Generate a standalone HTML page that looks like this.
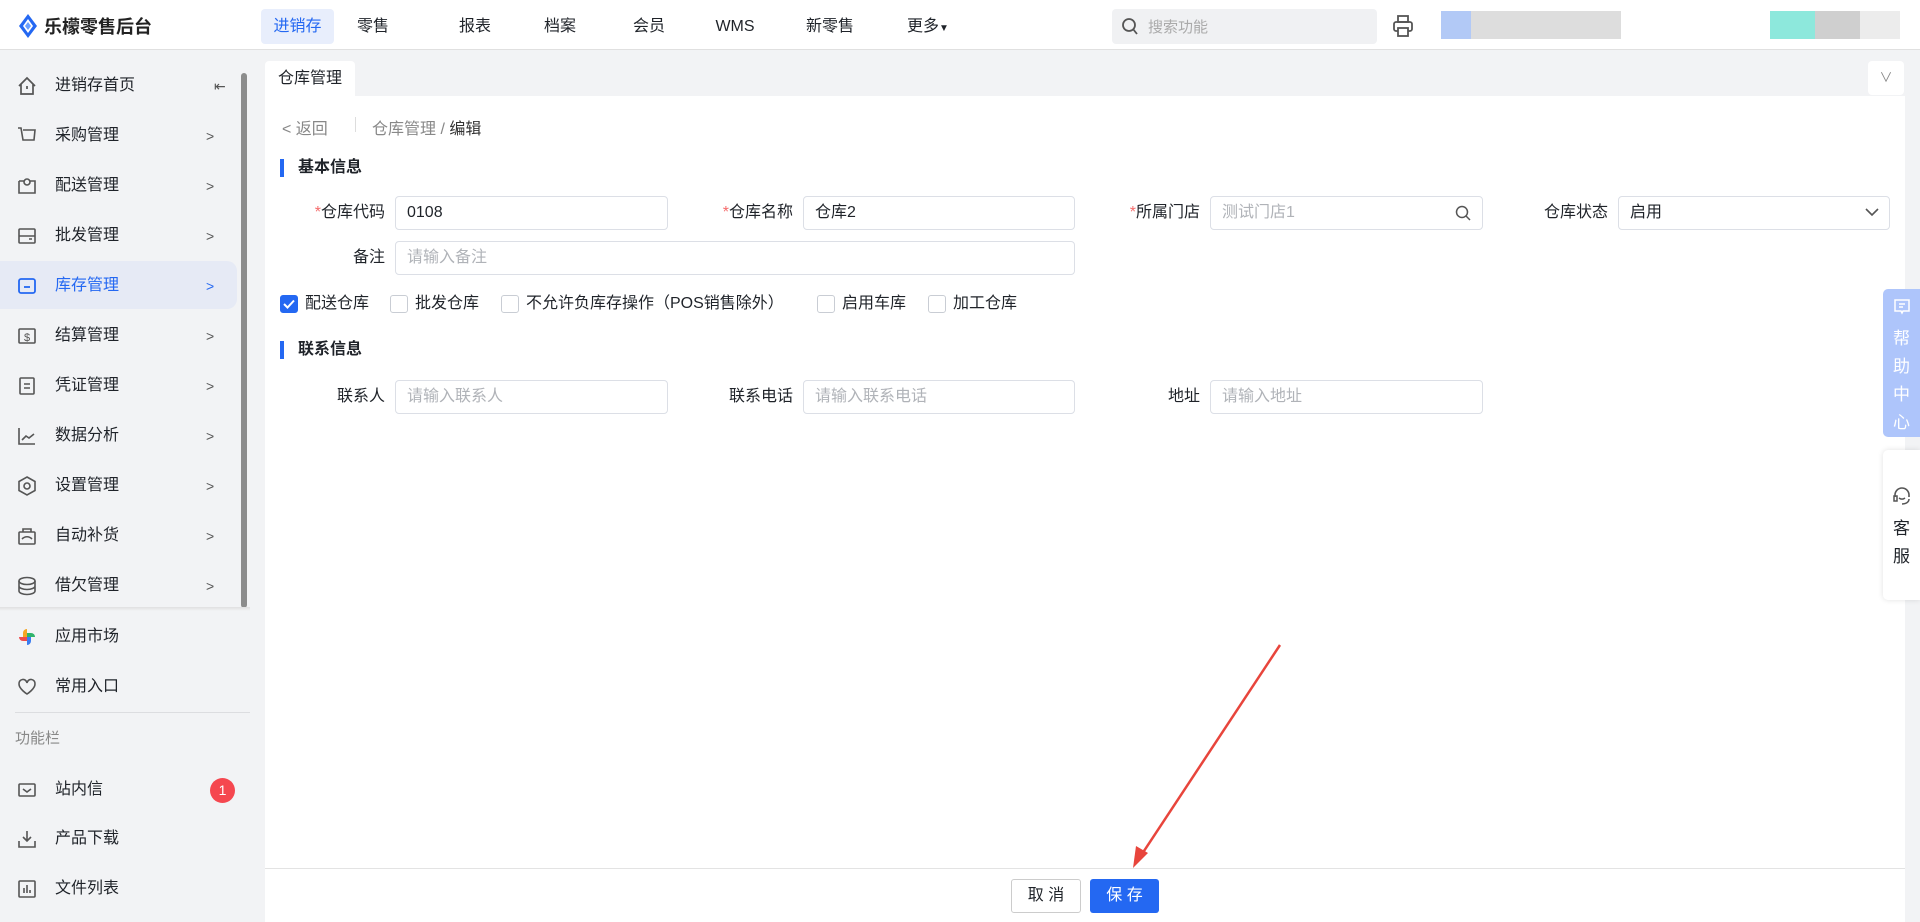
<!DOCTYPE html>
<html><head><meta charset="utf-8"><style>
*{margin:0;padding:0;box-sizing:border-box}
body{width:1920px;height:922px;overflow:hidden;background:#f2f3f5;font-family:"Liberation Sans","Noto Sans CJK SC",sans-serif;color:#1f2329;position:relative}
.abs{position:absolute}
.hdr{left:0;top:0;width:1920px;height:50px;background:#fff;border-bottom:1px solid #e0e0e0}
.nav{top:9px;height:35px;line-height:35px;font-size:16px;color:#1f2329;text-align:center}
.side{left:0;top:51px;width:264px;height:871px;background:#f2f3f5}
.it{left:0;width:240px;height:46px;font-size:16px;line-height:46px;padding-left:55px}
.it svg{position:absolute;left:17px;top:13px}
.chev{position:absolute;left:206px;top:0;color:#555;font-size:14px}
.main{left:265px;top:96px;width:1640px;height:772px;background:#fff}
.lbl{font-size:16px;text-align:right;height:34px;line-height:34px}
.inp{height:34px;border:1px solid #dcdfe6;border-radius:4px;font-size:16px;line-height:32px;padding-left:11px;background:#fff}
.ph{color:#b0b3b8}
.req{color:#f56c6c}
.sec{font-size:16px;font-weight:bold;padding-left:14px;border-left:4px solid #2468f2;line-height:18px;height:18px}
.cb{top:295px;height:18px;font-size:16px;line-height:18px;padding-left:25px}
.cb i{position:absolute;left:0;top:0;width:18px;height:18px;border:1px solid #c9cdd4;border-radius:3px;background:#fff}
</style></head><body>
<div class="abs hdr"></div>
<svg class="abs" style="left:18px;top:14px" width="20" height="24" viewBox="0 0 20 24"><path d="M10 0 L19 12 L10 24 L1 12Z" fill="#2468f2"/><path d="M10 5 L15 12 L10 19 L5 12Z" fill="#fff"/><path d="M10 8 L13 12 L10 16 L7 12Z" fill="#6aa0ff"/></svg>
<div class="abs" style="left:44px;top:13px;font-size:18px;font-weight:bold;color:#222">乐檬零售后台</div>
<div class="abs nav" style="left:261px;width:73px;background:#e8eefc;border-radius:4px;color:#2468f2">进销存</div>
<div class="abs nav" style="left:343px;width:60px">零售</div>
<div class="abs nav" style="left:450px;width:50px">报表</div>
<div class="abs nav" style="left:535px;width:50px">档案</div>
<div class="abs nav" style="left:624px;width:50px">会员</div>
<div class="abs nav" style="left:705px;width:60px">WMS</div>
<div class="abs nav" style="left:795px;width:70px">新零售</div>
<div class="abs nav" style="left:898px;width:60px">更多<span style="font-size:10px">▼</span></div>
<div class="abs" style="left:1112px;top:9px;width:265px;height:35px;background:#f0f1f3;border-radius:4px"></div>
<svg class="abs" style="left:1121px;top:17px" width="18" height="19" viewBox="0 0 18 19"><circle cx="8" cy="8" r="6" fill="none" stroke="#555" stroke-width="1.8"/><path d="M12 12l4 5" stroke="#555" stroke-width="1.8"/></svg>
<div class="abs" style="left:1148px;top:16px;font-size:15px;color:#aaa">搜索功能</div>
<svg class="abs" style="left:1392px;top:14px" width="22" height="24" viewBox="0 0 22 24"><rect x="6" y="2" width="10" height="6" fill="none" stroke="#555" stroke-width="1.8"/><rect x="2" y="8" width="18" height="9" rx="2" fill="none" stroke="#555" stroke-width="1.8"/><rect x="6" y="14" width="10" height="8" fill="#fff" stroke="#555" stroke-width="1.8"/></svg>
<div class="abs" style="left:1441px;top:11px;width:235px;height:28px;background:linear-gradient(90deg,#a9c3f5 0 30px,#d9d9d9 30px 180px,#fff 180px);opacity:.9"></div>
<div class="abs" style="left:1770px;top:11px;width:130px;height:28px;background:linear-gradient(90deg,#8de8dc 0 45px,#cfcfcf 45px 90px,#ececec 90px)"></div>

<div class="abs side">
<div class="abs it" style="top:12px">进销存首页<svg width="20" height="20" viewBox="0 0 20 20"><path d="M2 10L10 2l8 8M4 8v10h12V8" fill="none" stroke="#555" stroke-width="1.7"/><path d="M10 10v3" stroke="#555" stroke-width="1.7"/></svg><span class="chev" style="left:214px">⇤</span></div>
<div class="abs it" style="top:62px">采购管理<svg width="20" height="20" viewBox="0 0 20 20"><path d="M1 2h3l2 12h11l1-10H6" fill="none" stroke="#555" stroke-width="1.6"/></svg><span class="chev">&gt;</span></div>
<div class="abs it" style="top:112px">配送管理<svg width="20" height="20" viewBox="0 0 20 20"><path d="M2 5h5M13 5h5v12H2V5" fill="none" stroke="#555" stroke-width="1.6"/><circle cx="10" cy="6" r="3" fill="none" stroke="#555" stroke-width="1.6"/></svg><span class="chev">&gt;</span></div>
<div class="abs it" style="top:162px">批发管理<svg width="20" height="20" viewBox="0 0 20 20"><rect x="2" y="3" width="16" height="14" rx="1" fill="none" stroke="#555" stroke-width="1.6"/><path d="M2 10h16M12 13h3" stroke="#555" stroke-width="1.6"/></svg><span class="chev">&gt;</span></div>
<div class="abs" style="left:0;top:210px;width:237px;height:48px;background:#e6eaf5;border-radius:0 10px 10px 0"></div>
<div class="abs it" style="top:212px;color:#2468f2">库存管理<svg width="20" height="20" viewBox="0 0 20 20"><rect x="2" y="3" width="16" height="14" rx="2" fill="none" stroke="#2468f2" stroke-width="1.8"/><path d="M7 11h6" stroke="#2468f2" stroke-width="1.8"/></svg><span class="chev" style="color:#2468f2">&gt;</span></div>
<div class="abs it" style="top:262px">结算管理<svg width="20" height="20" viewBox="0 0 20 20"><rect x="2" y="3" width="16" height="14" rx="1" fill="none" stroke="#555" stroke-width="1.6"/><text x="10" y="15" font-size="11" text-anchor="middle" fill="#555">$</text></svg><span class="chev">&gt;</span></div>
<div class="abs it" style="top:312px">凭证管理<svg width="20" height="20" viewBox="0 0 20 20"><rect x="3" y="2" width="14" height="16" rx="1" fill="none" stroke="#555" stroke-width="1.6"/><path d="M7 8h6M7 12h6" stroke="#555" stroke-width="1.6"/></svg><span class="chev">&gt;</span></div>
<div class="abs it" style="top:362px">数据分析<svg width="20" height="20" viewBox="0 0 20 20"><path d="M2 2v16h16M5 14l4-4 3 2 5-4" fill="none" stroke="#555" stroke-width="1.6"/></svg><span class="chev">&gt;</span></div>
<div class="abs it" style="top:412px">设置管理<svg width="20" height="20" viewBox="0 0 20 20"><path d="M10 1l8 4.5v9L10 19l-8-4.5v-9z" fill="none" stroke="#555" stroke-width="1.6"/><circle cx="10" cy="10" r="3" fill="none" stroke="#555" stroke-width="1.6"/></svg><span class="chev">&gt;</span></div>
<div class="abs it" style="top:462px">自动补货<svg width="20" height="20" viewBox="0 0 20 20"><rect x="2" y="6" width="16" height="12" rx="1" fill="none" stroke="#555" stroke-width="1.6"/><path d="M6 6V3h8v3M5 13c3-3 7-3 10 0" fill="none" stroke="#555" stroke-width="1.6"/></svg><span class="chev">&gt;</span></div>
<div class="abs it" style="top:512px">借欠管理<svg width="20" height="20" viewBox="0 0 20 20"><ellipse cx="10" cy="5" rx="8" ry="3.5" fill="none" stroke="#555" stroke-width="1.6"/><path d="M2 5v10c0 2 4 3.5 8 3.5s8-1.5 8-3.5V5M2 10c0 2 4 3.5 8 3.5s8-1.5 8-3.5" fill="none" stroke="#555" stroke-width="1.6"/></svg><span class="chev">&gt;</span></div>
<div class="abs" style="left:241px;top:22px;width:6px;height:535px;background:#8c8c8c;border-radius:3px"></div>
<div class="abs" style="left:0;top:556px;width:250px;height:4px;background:linear-gradient(#e0e0e0,#f2f3f5)"></div>
<div class="abs it" style="top:563px">应用市场<svg width="20" height="20" viewBox="0 0 20 20"><path d="M10 2a4 4 0 0 0-4 4v4h4z" fill="#f5a623"/><path d="M18 10a4 4 0 0 0-4-4h-4v4z" fill="#2fb36b"/><path d="M10 18a4 4 0 0 0 4-4v-4h-4z" fill="#3a7cf0"/><path d="M2 10a4 4 0 0 0 4 4h4v-4z" fill="#ef4b4b"/></svg></div>
<div class="abs it" style="top:613px">常用入口<svg width="20" height="20" viewBox="0 0 20 20"><path d="M10 17S2 12 2 7a4 4 0 0 1 8-1 4 4 0 0 1 8 1c0 5-8 10-8 10z" fill="none" stroke="#555" stroke-width="1.6"/></svg></div>
<div class="abs" style="left:15px;top:661px;width:235px;height:1px;background:#dcdde0"></div>
<div class="abs" style="left:15px;top:676px;font-size:15px;color:#888">功能栏</div>
<div class="abs it" style="top:716px">站内信<svg width="20" height="20" viewBox="0 0 20 20"><rect x="2" y="4" width="16" height="12" rx="1" fill="none" stroke="#555" stroke-width="1.6"/><path d="M6 9l4 3 4-3" fill="none" stroke="#555" stroke-width="1.6"/></svg></div>
<div class="abs" style="left:210px;top:727px;width:25px;height:25px;border-radius:50%;background:#f5474f;color:#fff;font-size:14px;text-align:center;line-height:25px">1</div>
<div class="abs it" style="top:765px">产品下载<svg width="20" height="20" viewBox="0 0 20 20"><path d="M10 2v10M6 8l4 4 4-4M2 12v6h16v-6" fill="none" stroke="#555" stroke-width="1.6"/></svg></div>
<div class="abs it" style="top:815px">文件列表<svg width="20" height="20" viewBox="0 0 20 20"><rect x="2" y="2" width="16" height="16" rx="1" fill="none" stroke="#555" stroke-width="1.6"/><path d="M7 14V9M10 14V6M13 14v-3" stroke="#555" stroke-width="1.6"/></svg></div>
</div>

<div class="abs" style="left:265px;top:61px;width:90px;height:35px;background:#fff;border-radius:4px 4px 0 0;font-size:16px;line-height:35px;text-align:center">仓库管理</div>
<div class="abs" style="left:1868px;top:61px;width:36px;height:34px;background:#fff;border-radius:4px;color:#888;text-align:center;line-height:34px;font-size:13px">∨</div>
<div class="abs main"></div>
<div class="abs" style="left:282px;top:115px;font-size:16px;color:#888">&lt; 返回</div>
<div class="abs" style="left:355px;top:117px;width:1px;height:15px;background:#ddd"></div>
<div class="abs" style="left:372px;top:115px;font-size:16px;color:#888">仓库管理 / <span style="color:#333">编辑</span></div>
<div class="abs sec" style="left:280px;top:159px">基本信息</div>
<div class="abs lbl" style="left:280px;top:196px;width:105px"><span class="req">*</span>仓库代码</div>
<div class="abs inp" style="left:395px;top:196px;width:273px">0108</div>
<div class="abs lbl" style="left:690px;top:196px;width:103px"><span class="req">*</span>仓库名称</div>
<div class="abs inp" style="left:803px;top:196px;width:272px">仓库2</div>
<div class="abs lbl" style="left:1090px;top:196px;width:110px"><span class="req">*</span>所属门店</div>
<div class="abs inp ph" style="left:1210px;top:196px;width:273px">测试门店1</div>
<svg class="abs" style="left:1454px;top:204px" width="18" height="18" viewBox="0 0 18 18"><circle cx="8" cy="8" r="5.5" fill="none" stroke="#555" stroke-width="1.5"/><path d="M12 12l4 4" stroke="#555" stroke-width="1.5"/></svg>
<div class="abs lbl" style="left:1500px;top:196px;width:108px">仓库状态</div>
<div class="abs inp" style="left:1618px;top:196px;width:272px">启用</div>
<svg class="abs" style="left:1865px;top:207px" width="14" height="10" viewBox="0 0 14 10"><path d="M1 2l6 6 6-6" fill="none" stroke="#555" stroke-width="1.6"/></svg>
<div class="abs lbl" style="left:280px;top:241px;width:105px">备注</div>
<div class="abs inp ph" style="left:395px;top:241px;width:680px">请输入备注</div>
<div class="abs cb" style="left:280px"><i style="background:#2468f2;border-color:#2468f2"></i><svg class="abs" style="left:3px;top:4px" width="12" height="10" viewBox="0 0 12 10"><path d="M1 5l3.5 3.5L11 1.5" fill="none" stroke="#fff" stroke-width="2"/></svg>配送仓库</div>
<div class="abs cb" style="left:390px"><i></i>批发仓库</div>
<div class="abs cb" style="left:501px"><i></i>不允许负库存操作（POS销售除外）</div>
<div class="abs cb" style="left:817px"><i></i>启用车库</div>
<div class="abs cb" style="left:928px"><i></i>加工仓库</div>
<div class="abs sec" style="left:280px;top:341px">联系信息</div>
<div class="abs lbl" style="left:280px;top:380px;width:105px">联系人</div>
<div class="abs inp ph" style="left:395px;top:380px;width:273px">请输入联系人</div>
<div class="abs lbl" style="left:690px;top:380px;width:103px">联系电话</div>
<div class="abs inp ph" style="left:803px;top:380px;width:272px">请输入联系电话</div>
<div class="abs lbl" style="left:1090px;top:380px;width:110px">地址</div>
<div class="abs inp ph" style="left:1210px;top:380px;width:273px">请输入地址</div>

<div class="abs" style="left:1883px;top:289px;width:37px;height:148px;background:#aec5fb;border-radius:5px 0 0 5px;color:#fff;font-size:17px;text-align:center;padding-top:8px;line-height:28px">
<svg width="18" height="18" viewBox="0 0 18 18"><path d="M2 2h14v11H10l-1 2-1-2H2z" fill="none" stroke="#fff" stroke-width="1.5"/><path d="M6 6h6M6 9h4" stroke="#fff" stroke-width="1.5"/></svg><br>帮<br>助<br>中<br>心</div>
<div class="abs" style="left:1883px;top:450px;width:37px;height:150px;background:#fff;border-radius:5px 0 0 5px;box-shadow:0 0 6px rgba(0,0,0,.12);font-size:17px;text-align:center;padding-top:36px;line-height:28px">
<svg width="20" height="20" viewBox="0 0 20 20"><path d="M3 11V9a7 7 0 0 1 14 0v2" fill="none" stroke="#555" stroke-width="1.6"/><rect x="2" y="10" width="3" height="5" fill="none" stroke="#555" stroke-width="1.5"/><path d="M17 13c0 3-3 5-7 5M7 12c2 1.5 4 1.5 6 0" fill="none" stroke="#555" stroke-width="1.5"/></svg><br>客<br>服</div>

<div class="abs" style="left:265px;top:868px;width:1640px;height:54px;background:#fff;border-top:1px solid #e3e3e3"></div>
<div class="abs" style="left:1011px;top:879px;width:70px;height:34px;border:1px solid #ccc;border-radius:3px;background:#fff;font-size:16px;text-align:center;line-height:32px">取 消</div>
<div class="abs" style="left:1090px;top:879px;width:69px;height:34px;border-radius:3px;background:#2468f2;color:#fff;font-size:16px;text-align:center;line-height:34px">保 存</div>
<svg class="abs" style="left:0;top:0" width="1920" height="922"><path d="M1280 645L1140 857" stroke="#e8453c" stroke-width="2.5"/><path d="M1133 868L1136 846L1148 853Z" fill="#e8453c"/></svg>
</body></html>
